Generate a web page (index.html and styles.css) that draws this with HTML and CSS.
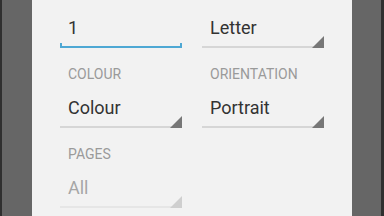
FILE: index.html
```html
<!DOCTYPE html>
<html>
<head>
<meta charset="UTF-8">
<title>Print options</title>
<link rel="stylesheet" href="styles.css">
</head>
<body>
	<div class="edge"></div>
	<div class="shade"></div>
	<div class="panel">
		<div class="options">
			<div class="option">
				<div class="label">COPIES</div>
				<div class="field edit">1</div>
			</div>
			<div class="option">
				<div class="label">PAPER SIZE</div>
				<div class="field spinner">Letter</div>
			</div>
			<div class="option">
				<div class="label">COLOUR</div>
				<div class="field spinner">Colour</div>
			</div>
			<div class="option">
				<div class="label">ORIENTATION</div>
				<div class="field spinner">Portrait</div>
			</div>
			<div class="option">
				<div class="label">PAGES</div>
				<div class="field spinner disabled">All</div>
			</div>
		</div>
	</div>
	<div class="shade right"></div>
	<div class="edge right"></div>
</body>
</html>
```

FILE: styles.css
```css
html, body {
	margin: 0;
	height: 100%;
}
body {
	display: flex;
	background: #2f2f2f;
	font-family: Roboto, "Liberation Sans", sans-serif;
	overflow: hidden;
}
.edge {
	width: 2px;
	background: #2f2f2f;
}
.edge.right {
	width: 3px;
}
.shade {
	width: 30px;
	background: #666666;
}
.shade.right {
	width: 29px;
}
.panel {
	width: 320px;
	background: #f2f2f2;
	padding: 0 28px;
	box-sizing: border-box;
	overflow: hidden;
}
.options {
	display: grid;
	grid-template-columns: 122px 122px;
	column-gap: 20px;
	margin-top: -14px;
}
.option {
	margin-bottom: 18px;
}
.label {
	font-size: 14px;
	line-height: 16px;
	color: #9a9a9a;
	padding-left: 8px;
}
.field {
	position: relative;
	font-size: 18px;
	line-height: 24px;
	color: #333333;
	padding: 14px 0 6px 8px;
	border-bottom: 2px solid #d6d6d6;
}
.field.edit {
	border-bottom-color: #4ea8d4;
}
.field.edit::after {
	content: "";
	position: absolute;
	left: 0;
	right: 0;
	bottom: -2px;
	height: 3px;
	border: 2px solid #4ea8d4;
	border-top: none;
}
.spinner::after {
	content: "";
	position: absolute;
	right: 0;
	bottom: -2px;
	border-left: 12px solid transparent;
	border-bottom: 12px solid #777777;
}
.disabled {
	color: #a6a6a6;
	border-bottom-color: #e6e6e6;
}
.disabled::after {
	border-bottom-color: #cfcfcf;
}
```
